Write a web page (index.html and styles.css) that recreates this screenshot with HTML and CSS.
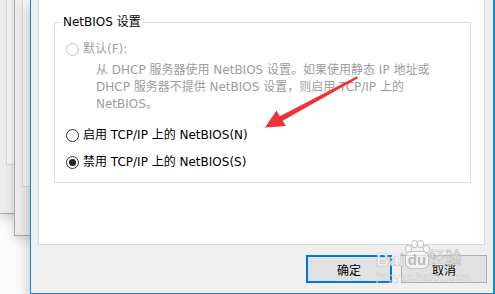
FILE: index.html
```html
<!DOCTYPE html>
<html lang="zh-CN">
<head>
<meta charset="utf-8">
<title>NetBIOS 设置</title>
<link rel="stylesheet" href="styles.css">
</head>
<body>
<div class="desk">
  <div class="win win-a"><div class="win-panel"></div></div>
  <div class="win win-b"><div class="win-panel"></div></div>
  <div class="dialog">
    <div class="panel">
      <div class="group">
        <div class="group-title">NetBIOS 设置</div>
        <div class="opt disabled"><span class="radio"></span><span>默认(F):</span></div>
        <div class="desc">从 DHCP 服务器使用 NetBIOS 设置。如果使用静态 IP 地址或<br>DHCP 服务器不提供 NetBIOS 设置，则启用 TCP/IP 上的<br>NetBIOS。</div>
        <div class="opt opt-n"><span class="radio"></span><span>启用 TCP/IP 上的 NetBIOS(N)</span></div>
        <div class="opt opt-s"><span class="radio on"></span><span>禁用 TCP/IP 上的 NetBIOS(S)</span></div>
      </div>
    </div>
    <div class="buttons">
      <div class="btn btn-default">确定</div>
      <div class="btn">取消</div>
    </div>
  </div>
  <svg class="arrow" width="495" height="294" viewBox="0 0 495 294">
    <polygon points="265,127.5 276.5,110.5 279.8,116.3 357,76.3 358,78.2 282.6,120.8 286,126" fill="#ee3338"/>
  </svg>
  <div class="watermark">
    <div class="wm-top">
      <span class="wm-bai">Bai</span>
      <span class="wm-paw">
        <span class="toe t1"></span><span class="toe t2"></span><span class="toe t3"></span><span class="toe t4"></span>
        <span class="wm-du">du</span>
      </span>
      <span class="wm-jy">经验</span>
    </div>
    <div class="wm-url">jingyan.baidu.com</div>
  </div>
</div>
</body>
</html>
```
FILE: styles.css
```css
html, body {
  margin: 0;
  padding: 0;
}
body {
  width: 495px;
  height: 294px;
  overflow: hidden;
  background: #ffffff;
  font-family: "DejaVu Sans", "Noto Sans CJK SC", sans-serif;
  font-size: 12px;
  color: #000;
}
.desk {
  position: relative;
  width: 495px;
  height: 294px;
  overflow: hidden;
  background: #fbfbfb;
}
.win {
  position: absolute;
  top: -20px;
  background: #ececec;
  border: 1px solid #a9a9a9;
  box-shadow: 0 3px 10px rgba(0, 0, 0, 0.18);
}
.win-panel {
  margin-left: 7px;
  height: calc(100% - 49px);
  background: #f7f7f7;
  border-left: 1px solid #d6d6d6;
  border-bottom: 1px solid #d6d6d6;
}
.win-a {
  left: -2px;
  width: 200px;
  height: 232px;
}
.win-b {
  left: 14px;
  width: 200px;
  height: 254px;
}
.dialog {
  position: absolute;
  left: 30px;
  top: 0;
  right: 0;
  bottom: 0;
  background: #efefef;
  border-left: 1px solid #1a86d8;
  border-right: 2px solid #1a86d8;
  border-bottom: 1px solid #1a86d8;
  padding: 0 8px 0 7px;
  box-shadow: -2px 4px 12px rgba(0, 0, 0, 0.2);
}
.panel {
  background: #fff;
  border-left: 1px solid #d9d9d9;
  border-right: 1px solid #d9d9d9;
  border-bottom: 1px solid #d9d9d9;
  padding: 22px 13px 0 15px;
  box-sizing: border-box;
  height: 245px;
}
.group {
  border: 1px solid #dcdcdc;
  height: 161px;
  box-sizing: border-box;
}
.group-title {
  display: block;
  width: max-content;
  margin: -9px 0 0 6px;
  padding: 0 2px;
  height: 17px;
  line-height: 17px;
  background: #fff;
}
.opt {
  display: flex;
  align-items: center;
  height: 17px;
  line-height: 17px;
  padding-left: 11px;
}
.opt.disabled {
  margin-top: 10px;
  color: #a0a0a0;
}
.radio {
  width: 13px;
  height: 13px;
  box-sizing: border-box;
  border: 1px solid #333;
  border-radius: 50%;
  background: #fff;
  margin-right: 4px;
  display: flex;
  align-items: center;
  justify-content: center;
  flex: none;
}
.disabled .radio {
  border-color: #c2c2c2;
}
.radio.on::after {
  content: "";
  width: 7px;
  height: 7px;
  border-radius: 50%;
  background: #222;
}
.desc {
  margin-top: 4px;
  padding-left: 41px;
  line-height: 17px;
  height: 51px;
  color: #9c9c9c;
  white-space: nowrap;
}
.opt-n {
  margin-top: 14px;
}
.opt-s {
  margin-top: 10px;
}
.buttons {
  display: flex;
  justify-content: flex-end;
  gap: 9px;
  margin-top: 10px;
  margin-right: -2px;
}
.btn {
  width: 86px;
  height: 28px;
  box-sizing: border-box;
  border: 1px solid #adadad;
  background: #e1e1e1;
  display: flex;
  align-items: center;
  justify-content: center;
  font-size: 12px;
}
.btn-default {
  border: 2px solid #0078d7;
}
.arrow {
  position: absolute;
  left: 0;
  top: 0;
  pointer-events: none;
}
.watermark {
  position: absolute;
  left: 376px;
  top: 239px;
  width: 94px;
  color: rgba(255, 255, 255, 0.75);
  font-family: "Liberation Sans", "Noto Sans CJK SC", sans-serif;
}
.wm-top {
  display: flex;
  align-items: flex-end;
  height: 30px;
}
.wm-bai {
  font-size: 18px;
  font-weight: bold;
  line-height: 18px;
  -webkit-text-stroke: 0.6px rgba(160, 160, 160, 0.7);
}
.wm-paw {
  position: relative;
  width: 22px;
  height: 20px;
  margin: 0 1px 0 1px;
}
.toe {
  position: absolute;
  width: 5px;
  height: 6px;
  border-radius: 50%;
  background: rgba(255, 255, 255, 0.7);
  border: 0.6px solid rgba(160, 160, 160, 0.6);
}
.t1 { left: 0; top: -4px; }
.t2 { left: 6px; top: -9px; }
.t3 { left: 12px; top: -9px; }
.t4 { left: 18px; top: -4px; }
.wm-du {
  position: absolute;
  left: 0;
  bottom: 0;
  width: 22px;
  height: 16px;
  border-radius: 6px;
  background: rgba(255, 255, 255, 0.55);
  border: 0.6px solid rgba(160, 160, 160, 0.6);
  color: rgba(150, 150, 150, 0.6);
  font-size: 15px;
  font-weight: bold;
  line-height: 15px;
  text-align: center;
}
.wm-jy {
  font-size: 17px;
  line-height: 20px;
  -webkit-text-stroke: 0.6px rgba(160, 160, 160, 0.7);
}
.wm-url {
  font-size: 11px;
  line-height: 14px;
  margin-top: 1px;
  letter-spacing: 0.3px;
  -webkit-text-stroke: 0.4px rgba(170, 170, 170, 0.6);
}
```
